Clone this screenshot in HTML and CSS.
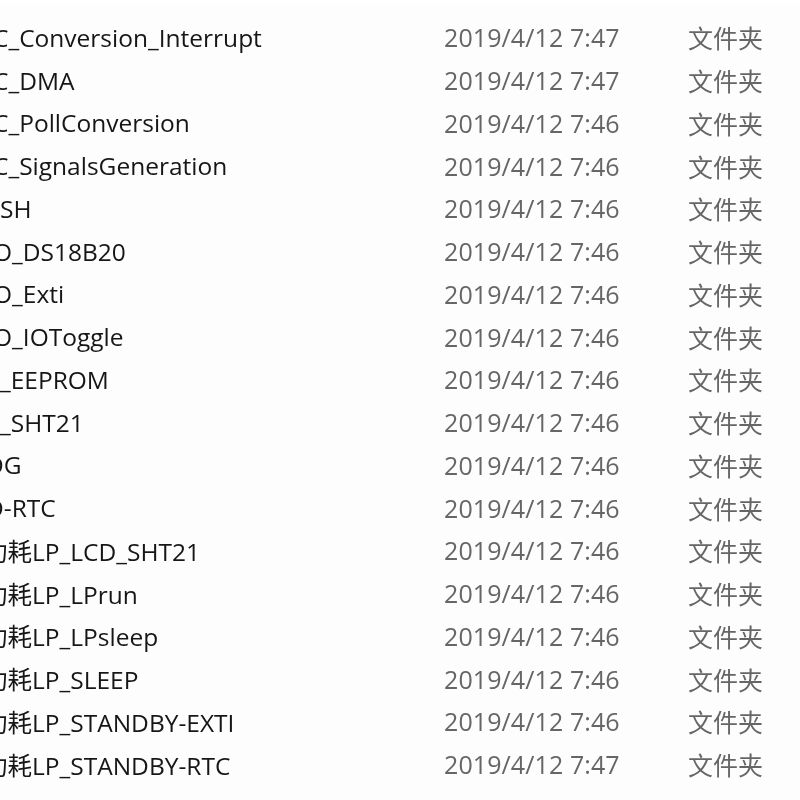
FILE: index.html
```html
<!DOCTYPE html>
<html lang="zh">
<head>
<meta charset="utf-8">
<link rel="stylesheet" href="styles.css">
</head>
<body>
<div class="list">
  <div class="row"><div class="name"><span class="cut">C_Conversion_Interrupt</span></div><div class="date">2019/4/12 7:47</div><div class="type">文件夹</div></div>
  <div class="row"><div class="name"><span class="cut">C_DMA</span></div><div class="date">2019/4/12 7:47</div><div class="type">文件夹</div></div>
  <div class="row"><div class="name"><span class="cut">C_PollConversion</span></div><div class="date">2019/4/12 7:46</div><div class="type">文件夹</div></div>
  <div class="row"><div class="name"><span class="cut">C_SignalsGeneration</span></div><div class="date">2019/4/12 7:46</div><div class="type">文件夹</div></div>
  <div class="row"><div class="name"><span class="full">SH</span></div><div class="date">2019/4/12 7:46</div><div class="type">文件夹</div></div>
  <div class="row"><div class="name"><span class="cut">O_DS18B20</span></div><div class="date">2019/4/12 7:46</div><div class="type">文件夹</div></div>
  <div class="row"><div class="name"><span class="cut">O_Exti</span></div><div class="date">2019/4/12 7:46</div><div class="type">文件夹</div></div>
  <div class="row"><div class="name"><span class="cut">O_IOToggle</span></div><div class="date">2019/4/12 7:46</div><div class="type">文件夹</div></div>
  <div class="row"><div class="name"><span class="full">_EEPROM</span></div><div class="date">2019/4/12 7:46</div><div class="type">文件夹</div></div>
  <div class="row"><div class="name"><span class="full">_SHT21</span></div><div class="date">2019/4/12 7:46</div><div class="type">文件夹</div></div>
  <div class="row"><div class="name"><span class="cut-more">DG</span></div><div class="date">2019/4/12 7:46</div><div class="type">文件夹</div></div>
  <div class="row"><div class="name"><span class="cut-more">D-RTC</span></div><div class="date">2019/4/12 7:46</div><div class="type">文件夹</div></div>
  <div class="row"><div class="name"><span class="cut-cjk">功耗LP_LCD_SHT21</span></div><div class="date">2019/4/12 7:46</div><div class="type">文件夹</div></div>
  <div class="row"><div class="name"><span class="cut-cjk">功耗LP_LPrun</span></div><div class="date">2019/4/12 7:46</div><div class="type">文件夹</div></div>
  <div class="row"><div class="name"><span class="cut-cjk">功耗LP_LPsleep</span></div><div class="date">2019/4/12 7:46</div><div class="type">文件夹</div></div>
  <div class="row"><div class="name"><span class="cut-cjk">功耗LP_SLEEP</span></div><div class="date">2019/4/12 7:46</div><div class="type">文件夹</div></div>
  <div class="row"><div class="name"><span class="cut-cjk">功耗LP_STANDBY-EXTI</span></div><div class="date">2019/4/12 7:46</div><div class="type">文件夹</div></div>
  <div class="row"><div class="name"><span class="cut-cjk">功耗LP_STANDBY-RTC</span></div><div class="date">2019/4/12 7:47</div><div class="type">文件夹</div></div>
</div>
</body>
</html>
```

FILE: styles.css
```css
html, body {
  margin: 0;
  padding: 0;
  background: #ffffff;
  width: 800px;
  height: 800px;
  overflow: hidden;
}
body {
  font-family: "Open Sans", "Noto Sans CJK SC", sans-serif;
  font-size: 25px;
  color: #161616;
}
.list {
  border-top: 3px solid #ffffff;
  background: #fdfdfd;
  padding-top: 13px;
  height: 800px;
  filter: blur(0.35px);
}
.row {
  display: grid;
  grid-template-columns: 444px 244px 1fr;
  height: 42.75px;
  align-items: center;
  white-space: nowrap;
}
.name {
  overflow: hidden;
  font-size: 24.5px;
}
.cut { display: inline-block; margin-left: -7px; }
.cut-more { display: inline-block; margin-left: -14px; }
.cut-cjk { display: inline-block; margin-left: -17px; }
.full { display: inline-block; margin-left: 0; }
.date, .type {
  color: #666666;
}
.date {
  letter-spacing: 0.1px;
}
```
